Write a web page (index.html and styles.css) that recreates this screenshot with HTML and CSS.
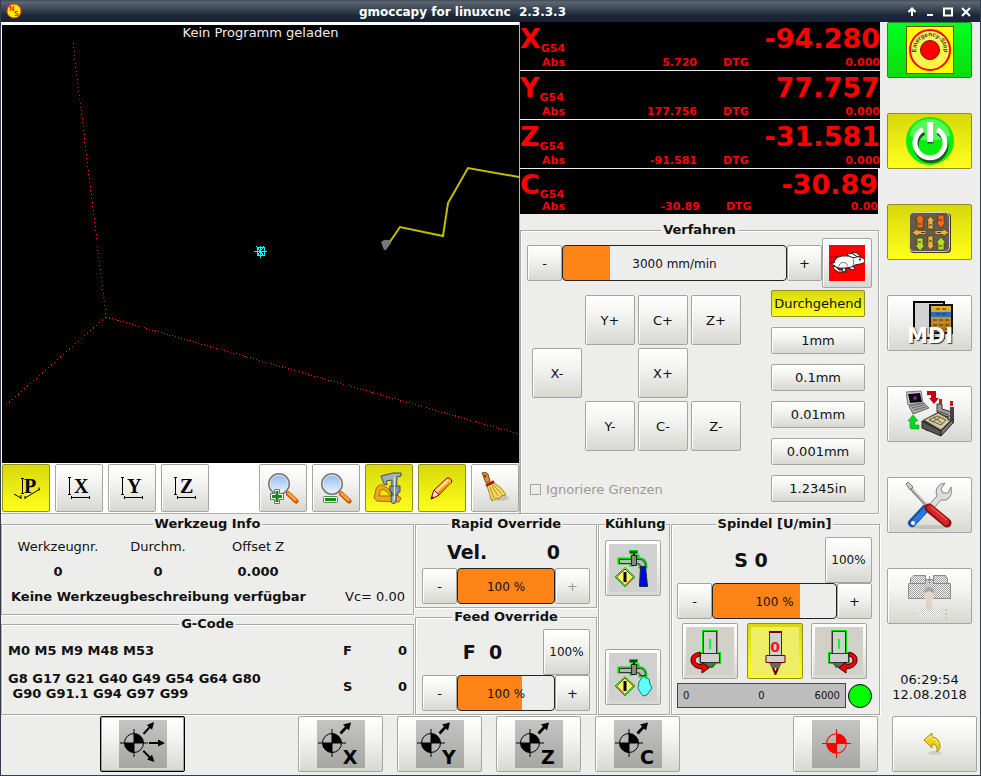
FILE: index.html
```html
<!DOCTYPE html>
<html lang="de">

<head>
  <meta charset="UTF-8">
  <meta name="viewport" content="width=device-width, initial-scale=1.0">
  <title>gmoccapy for linuxcnc 2.3.3.3</title>
  <link rel="stylesheet" href="styles.css">
</head>

<body>
  <!-- Shared icon parts -->
  <svg class="defs" width="0" height="0" aria-hidden="true">
    <defs>
      <linearGradient id="steel" x1="0" y1="0" x2="0" y2="1">
        <stop offset="0" stop-color="#c4c4c4" />
        <stop offset="1" stop-color="#a6a6a3" />
      </linearGradient>
      <linearGradient id="glass" x1="0" y1="0" x2="0" y2="1">
        <stop offset="0" stop-color="#8fb8ea" />
        <stop offset="1" stop-color="#eef6ff" />
      </linearGradient>
      <linearGradient id="bronze" x1="0" y1="0" x2="0" y2="1">
        <stop offset="0" stop-color="#e9b040" />
        <stop offset="1" stop-color="#a8701c" />
      </linearGradient>
      <pattern id="checker" width="2" height="2" patternUnits="userSpaceOnUse">
        <rect width="1" height="1" fill="#9d9d9d" />
        <rect x="1" y="1" width="1" height="1" fill="#9d9d9d" />
      </pattern>
    </defs>
    <symbol id="datum" viewBox="0 0 28 28">
      <circle cx="14" cy="14" r="9.5" fill="none" stroke="currentColor" />
      <path d="M14 14V4.500A9.500 9.500 0 0 1 23.500 14zM14 14v9.500A9.500 9.500 0 0 1 4.500 14z" fill="currentColor" />
      <path d="M14 0v28M0 14h28" stroke="currentColor" />
    </symbol>
    <symbol id="arrow" viewBox="0 0 16 8">
      <path d="M0 3h9V0.500L16 4L9 7.500V5H0z" fill="#000" />
    </symbol>
    <symbol id="home-axis" viewBox="0 0 48 48">
      <rect width="48" height="48" fill="url(#steel)" />
      <use href="#datum" x="1" y="9" width="28" height="28" />
      <path d="M22.500 12.500L28 6.500L26 4.500L34 2.500L32 10.500L30 8.500L24.500 14.500z" fill="#000" />
    </symbol>
    <symbol id="magnifier" viewBox="0 0 32 32">
      <path d="M20 20l3 3" stroke="#666" stroke-width="3" />
      <path d="M21.500 22l7.500 7" stroke="#c94f00" stroke-width="5" stroke-linecap="round" />
      <path d="M21.500 21.500l7 6.500" stroke="#ffa239" stroke-width="3" stroke-linecap="round" />
      <circle cx="12" cy="12" r="10" fill="url(#glass)" stroke="#777" stroke-width="2" />
      <circle cx="12" cy="12" r="9" fill="none" stroke="#eee" />
    </symbol>
    <symbol id="tap" viewBox="0 0 48 48">
      <rect width="48" height="48" fill="#d0d0d0" />
      <path d="M10 15h13v-3h6v3h3q5 1 5 8h-6v-3q0-1-2-1h-6v2h-1v-2H10z" fill="none" stroke="#00d800" stroke-width="3" />
      <path d="M25 7v5M20 8h9" stroke="#00d800" stroke-width="4" />
      <path d="M25 7v14M21 8h7" stroke="#183c18" stroke-width="2" />
      <path d="M10.500 15.500h21q5 1 5 7h-5q0-3-3-3h-18z" fill="#b8b8b8" stroke="#333" />
      <path d="M22.500 11.500h5v10h-5z" fill="#888" stroke="#222" />
      <path d="M16 23.500L26 33L16 43L6 33z" fill="#ffff50" stroke="#00b800" />
      <path d="M16 25L24.500 33L16 41.500L7.500 33z" fill="#fff36b" stroke="#333" />
      <path d="M16 28v10" stroke="#000" stroke-width="3" />
    </symbol>
    <symbol id="spindle" viewBox="0 0 48 48">
      <path d="M17.500 4.500h13v22h3v9h-4l-3 4h-5l-3-4h-4v-9h3z" fill="none" stroke="#00e000" stroke-width="3" />
      <path d="M18 35h12l-4 5h-4z" fill="#666" stroke="#333" />
      <path d="M17.500 4.500h13v22h-13z" fill="#d0d0cd" stroke="#333" />
      <path d="M14.500 26.500h19v9h-19z" fill="#d0d0cd" stroke="#333" />
      <path d="M24 12v10" stroke="#00ff30" stroke-width="2" />
    </symbol>
  </svg>

  <div class="window">
    <header class="titlebar">
      <svg class="app-logo" viewBox="0 0 16 16" aria-hidden="true">
        <circle cx="8" cy="8" r="7" fill="#ffef00" stroke="#ff3c00" />
        <text x="3" y="8" class="logo-text">N</text>
        <text x="8" y="13" class="logo-text">S</text>
      </svg>
      <h1>gmoccapy for linuxcnc&nbsp; 2.3.3.3</h1>
      <div class="window-controls">
        <button type="button" aria-label="Einrollen"><svg viewBox="0 0 10 10"><path d="M5 9V2M1.500 5L5 1.500L8.500 5" /></svg></button>
        <button type="button" aria-label="Minimieren"><svg viewBox="0 0 10 10"><path d="M2 8h6" /></svg></button>
        <button type="button" aria-label="Maximieren"><svg viewBox="0 0 10 10"><path d="M1 1.500h8v7H1z" /></svg></button>
        <button type="button" aria-label="Schließen"><svg viewBox="0 0 10 10"><path d="M1 1l8 8M9 1l-8 8" /></svg></button>
      </div>
    </header>

    <div class="content">
      <main class="workspace">
        <div class="upper">
          <section class="preview-panel">
            <div class="preview">
              <svg viewBox="0 0 517 438" preserveAspectRatio="xMidYMid slice" aria-hidden="true">
                <g fill="none" stroke="#e01818" shape-rendering="crispEdges">
                  <path d="M71 18L104 292" stroke-dasharray="1 3" />
                  <path d="M104 292L3 381" stroke-dasharray="1 3" />
                  <path d="M104 292L517 409" stroke-dasharray="1 2" />
                </g>
                <path d="M383 224L398 202L441 211L446 178L466 143L517 152" fill="none" stroke="#c2bf00" stroke-width="2" />
                <path d="M379 217l3-2h5l2 3l-5 7h-2z" fill="#777" />
                <path d="M252 226h13M254 221l8 10M262 221l-7 10M258 221v12M255 222h7v8h-7z" stroke="#00ffff" fill="none" shape-rendering="crispEdges" />
              </svg>
              <p>Kein Programm geladen</p>
            </div>
            <div class="preview-tools">
              <button type="button" class="btn active" aria-label="Perspektive">
                <svg viewBox="0 0 32 32" width="32" height="32">
                  <path d="M12.500 6v15M11 6.500h3M11 21.500h3M4 22l7 4M11 23v4M15 26l15-9M29 15.500v3M15 24v3" stroke="#000" fill="none" />
                  <text x="14" y="21" class="view-letter">P</text>
                </svg>
              </button>
              <button type="button" class="btn" aria-label="Ansicht X">
                <svg viewBox="0 0 32 32" width="32" height="32">
                  <path d="M6.500 5v17M5 5.500h3M5 22.500h3M9 25.500h17M8.500 24v3M26.500 24v3" stroke="#000" fill="none" />
                  <text x="11" y="21" class="view-letter">X</text>
                </svg>
              </button>
              <button type="button" class="btn" aria-label="Ansicht Y">
                <svg viewBox="0 0 32 32" width="32" height="32">
                  <path d="M6.500 5v17M5 5.500h3M5 22.500h3M9 25.500h17M8.500 24v3M26.500 24v3" stroke="#000" fill="none" />
                  <text x="11" y="21" class="view-letter">Y</text>
                </svg>
              </button>
              <button type="button" class="btn" aria-label="Ansicht Z">
                <svg viewBox="0 0 32 32" width="32" height="32">
                  <path d="M6.500 5v17M5 5.500h3M5 22.500h3M9 25.500h17M8.500 24v3M26.500 24v3" stroke="#000" fill="none" />
                  <text x="11" y="21" class="view-letter">Z</text>
                </svg>
              </button>
              <button type="button" class="btn push-right" aria-label="Vergrößern">
                <svg viewBox="0 0 32 32" width="32" height="32">
                  <use href="#magnifier" width="32" height="32" />
                  <path d="M7.500 17.500h5v4h4v6h-4v4h-5v-4h-4v-6h4z" fill="#fff" stroke="#4b8b4b" />
                  <path d="M10 19v11M5 24.500h10" stroke="#178a17" stroke-width="3" />
                </svg>
              </button>
              <button type="button" class="btn" aria-label="Verkleinern">
                <svg viewBox="0 0 32 32" width="32" height="32">
                  <use href="#magnifier" width="32" height="32" />
                  <rect x="3.500" y="24.500" width="14" height="6" rx="1" fill="#fff" stroke="#4b8b4b" />
                  <path d="M5 27.500h11" stroke="#178a17" stroke-width="3" />
                </svg>
              </button>
              <button type="button" class="btn active" aria-label="Bemaßung">
                <svg viewBox="0 0 32 32" width="32" height="32">
                  <path d="M1 26l2-9q2-5 7-4l18 13l-2 4l-22-1z" fill="#f0a81c" stroke="#a66a00" />
                  <path d="M6 24l1-5q2-3 5-1l6 6z" fill="#e8e410" stroke="#a66a00" />
                  <path d="M8 4l12-3h8v3l-4 1l-1 25l-2 2l-3-2l1-22l-6 1l1 4l-3-1z" fill="#9fb0bc" stroke="#3f4d58" />
                  <path d="M17 14h10v6h-2v3h-6v-3h-2z" fill="#8495a3" stroke="#3f4d58" />
                  <path d="M21.500 5v23" stroke="#dfe8ee" />
                </svg>
              </button>
              <button type="button" class="btn active" aria-label="Werkzeugweg">
                <svg viewBox="0 0 32 32" width="32" height="32">
                  <path d="M5 27l3-9L21 6q4-1 5 4L13 23z" fill="#ffb84d" stroke="#b50000" />
                  <path d="M10 19L22 8" stroke="#ffe4a0" stroke-width="2" />
                  <path d="M12 22L24 11" stroke="#e68a00" stroke-width="2" />
                  <path d="M8 18l5 5l-8 4z" fill="#fff1dc" stroke="#b50000" />
                  <path d="M5 27l1-3l2 2z" fill="#222" />
                </svg>
              </button>
              <button type="button" class="btn" aria-label="Löschen">
                <svg viewBox="0 0 32 32" width="32" height="32">
                  <ellipse cx="20" cy="26" rx="10" ry="3" fill="#c4c4bd" />
                  <path d="M3 1q3-2 6 1l2 7l-4 2z" fill="#d69543" stroke="#7c4c12" />
                  <circle cx="6" cy="4" r="1.500" fill="#7c4c12" />
                  <path d="M8 14l7-3q9 5 12 12l-5 1l-2 3l-3-1l-4 3Q11 23 8 14z" fill="#f4d766" stroke="#a98617" />
                  <path d="M11 15l4 11M13 14l6 10M14 13l9 9" stroke="#b8931f" fill="none" />
                  <path d="M7 13.500l8-4" stroke="#b01818" stroke-width="3" />
                </svg>
              </button>
            </div>
          </section>

          <section class="machine-panel">
            <div class="dro">
              <div class="dro-row">
                <div class="dro-main"><span>X<small>G54</small></span><span>-94.280</span></div>
                <div class="dro-sub"><span>Abs</span><span>5.720</span><span>DTG</span><span>0.000</span></div>
              </div>
              <div class="dro-row">
                <div class="dro-main"><span>Y<small>G54</small></span><span>77.757</span></div>
                <div class="dro-sub"><span>Abs</span><span>177.756</span><span>DTG</span><span>0.000</span></div>
              </div>
              <div class="dro-row">
                <div class="dro-main"><span>Z<small>G54</small></span><span>-31.581</span></div>
                <div class="dro-sub"><span>Abs</span><span>-91.581</span><span>DTG</span><span>0.000</span></div>
              </div>
              <div class="dro-row compact">
                <div class="dro-main"><span>C<small>G54</small></span><span>-30.89</span></div>
                <div class="dro-sub"><span>Abs</span><span>-30.89</span><span>DTG</span><span>0.00</span></div>
              </div>
            </div>

            <fieldset class="frame jog">
              <legend>Verfahren</legend>
              <div class="jog-speed">
                <div class="slider-row">
                  <button type="button" class="btn">-</button>
                  <label class="slider">
                    <input type="range" min="0" max="14000" value="3000" aria-label="Vorschub" style="--fill: 21%">
                    <span>3000 mm/min</span>
                  </label>
                  <button type="button" class="btn">+</button>
                </div>
                <button type="button" class="btn rabbit" aria-label="Eilgang">
                  <svg viewBox="0 0 36 36" width="36" height="36">
                    <rect width="36" height="36" fill="#ff0000" />
                    <path d="M1 12h13M2 14.500h9M1 18h5" stroke="#700" />
                    <g fill="#fff" stroke="#222" stroke-width="1" stroke-linejoin="round">
                      <path d="M27 13q-7 0-9-4q5-2 10 2z" />
                      <path d="M29 12q-5-2-6-5q5 0 8 4z" />
                      <path d="M6 21l4 4h7v2h-8l-5-4z" />
                      <path d="M21 20l5 3l-1 2l-7-2zM17 22l-1 5l-3-1l1-5z" />
                      <path d="M5 20q-2 1-2-1t2-1q1-6 8-7q7-1 12 2q3-2 6-1q5 1 5 4q-1 3-5 3l-5 1q-4 3-10 3q-8 1-11-3z" />
                    </g>
                    <path d="M10 21q1-5 7-3l2 3M24 14q2 3 0 6" fill="none" stroke="#777" />
                    <circle cx="31" cy="14.500" r="1" fill="#000" />
                  </svg>
                </button>
              </div>
              <div class="jog-body">
                <div class="jog-left">
                  <div class="jog-grid">
                    <button type="button" class="btn y-plus">Y+</button>
                    <button type="button" class="btn">C+</button>
                    <button type="button" class="btn">Z+</button>
                    <button type="button" class="btn x-minus">X-</button>
                    <button type="button" class="btn x-plus">X+</button>
                    <button type="button" class="btn y-minus">Y-</button>
                    <button type="button" class="btn">C-</button>
                    <button type="button" class="btn">Z-</button>
                  </div>
                  <label class="check"><input type="checkbox" disabled> Ignoriere Grenzen</label>
                </div>
                <div class="increments">
                  <button type="button" class="btn active">Durchgehend</button>
                  <button type="button" class="btn">1mm</button>
                  <button type="button" class="btn">0.1mm</button>
                  <button type="button" class="btn">0.01mm</button>
                  <button type="button" class="btn">0.001mm</button>
                  <button type="button" class="btn">1.2345in</button>
                </div>
              </div>
            </fieldset>
          </section>
        </div>

        <div class="lower">
          <div class="stack info">
            <fieldset class="frame tool-info">
              <legend>Werkzeug Info</legend>
              <table>
                <tr>
                  <th>Werkzeugnr.</th>
                  <th>Durchm.</th>
                  <th>Offset Z</th>
                </tr>
                <tr>
                  <td>0</td>
                  <td>0</td>
                  <td>0.000</td>
                </tr>
              </table>
              <p class="tool-desc"><strong>Keine Werkzeugbeschreibung verfügbar</strong><span>Vc= 0.00</span></p>
            </fieldset>
            <fieldset class="frame gcode">
              <legend>G-Code</legend>
              <div class="code-row">
                <p>M0 M5 M9 M48 M53</p><span>F</span><span>0</span>
              </div>
              <div class="code-row">
                <p>G8 G17 G21 G40 G49 G54 G64 G80<br>&nbsp;G90 G91.1 G94 G97 G99</p><span>S</span><span>0</span>
              </div>
            </fieldset>
          </div>

          <div class="stack overrides">
            <fieldset class="frame rapid">
              <legend>Rapid Override</legend>
              <div class="reading spread"><span>Vel.</span><span>0</span></div>
              <div class="slider-row">
                <button type="button" class="btn">-</button>
                <label class="slider">
                  <input type="range" min="0" max="100" value="100" aria-label="Rapid Override" style="--fill: 100%">
                  <span>100 %</span>
                </label>
                <button type="button" class="btn" disabled>+</button>
              </div>
            </fieldset>
            <fieldset class="frame feed">
              <legend>Feed Override</legend>
              <div class="reading"><span class="value">F&nbsp; 0</span><button type="button" class="btn reset">100%</button></div>
              <div class="slider-row">
                <button type="button" class="btn">-</button>
                <label class="slider">
                  <input type="range" min="0" max="150" value="100" aria-label="Feed Override" style="--fill: 67%">
                  <span>100 %</span>
                </label>
                <button type="button" class="btn">+</button>
              </div>
            </fieldset>
          </div>

          <fieldset class="frame cooling">
            <legend>Kühlung</legend>
            <div class="cooling-buttons">
              <button type="button" class="btn square" aria-label="Flut">
                <svg viewBox="0 0 48 48" width="48" height="48">
                  <use href="#tap" width="48" height="48" />
                  <path d="M31.500 22.500h5l2 20h-8z" fill="#0000f0" stroke="#003a20" />
                </svg>
              </button>
              <button type="button" class="btn square" aria-label="Nebel">
                <svg viewBox="0 0 48 48" width="48" height="48">
                  <use href="#tap" width="48" height="48" />
                  <path d="M34 23l3 2l3 1l1 5l2 4l-3 4l-2 3l-4 1l-3-4l-2-4l1-6z" fill="#60ffff" stroke="#009060" />
                </svg>
              </button>
            </div>
          </fieldset>

          <fieldset class="frame spindle">
            <legend>Spindel [U/min]</legend>
            <div class="reading"><span class="value">S 0</span><button type="button" class="btn reset">100%</button></div>
            <div class="slider-row">
              <button type="button" class="btn">-</button>
              <label class="slider">
                <input type="range" min="0" max="140" value="100" aria-label="Spindel Override" style="--fill: 71%">
                <span>100 %</span>
              </label>
              <button type="button" class="btn">+</button>
            </div>
            <div class="spindle-buttons">
              <button type="button" class="btn square" aria-label="Linkslauf">
                <svg viewBox="0 0 48 48" width="48" height="48">
                  <rect width="48" height="48" fill="#d2d1c9" />
                  <use href="#spindle" width="48" height="48" />
                  <path d="M14 25Q4 27 5 34Q6 41 16 42v4l7-5l-7-6v3Q9 37 9 33Q9 30 14 29z" fill="#f00000" stroke="#400" />
                </svg>
              </button>
              <button type="button" class="btn square active" aria-label="Spindel Stopp">
                <svg viewBox="0 0 48 48" width="48" height="48">
                  <rect width="48" height="48" fill="#eeee66" />
                  <path d="M18.500 5h12v24h-12z" fill="#d0d0cd" stroke="#333" />
                  <path d="M18 5h13" stroke="#700" stroke-width="2" />
                  <path d="M20 36h9l-4.500 11z" fill="#ffe84d" stroke="#600" stroke-width="2" />
                  <path d="M15 28.500h19v7H15z" fill="#d0d0cd" stroke="#600" />
                  <path d="M18 36h13l-3 5h-7z" fill="#666" />
                  <text x="24" y="25" class="stop-digit">0</text>
                </svg>
              </button>
              <button type="button" class="btn square" aria-label="Rechtslauf">
                <svg viewBox="0 0 48 48" width="48" height="48">
                  <rect width="48" height="48" fill="#d2d1c9" />
                  <use href="#spindle" width="48" height="48" />
                  <path d="M34 25Q43 27 42 34Q41 41 31 42v4l-7-5l7-6v3Q38 37 38 33Q38 30 34 29z" fill="#f00000" stroke="#400" />
                </svg>
              </button>
            </div>
            <div class="rpm">
              <div class="rpm-bar"><span>0</span><span>0</span><span>6000</span></div>
              <span class="led"></span>
            </div>
          </fieldset>
        </div>
      </main>

      <aside class="sidebar">
        <button type="button" class="btn go" aria-label="Not-Aus">
          <svg viewBox="0 0 48 48" width="48" height="48">
            <rect x=".5" y=".5" width="47" height="47" fill="#ffff00" stroke="#705000" />
            <circle cx="24" cy="24" r="20" fill="#fff44a" stroke="#ff0000" stroke-width="2" />
            <circle cx="24" cy="24" r="9.500" fill="#ff0000" stroke="#701010" />
            <path id="stop-arc" d="M13 33A14 14 0 1 1 35 33" fill="none" />
            <text class="estop-text"><textPath href="#stop-arc" startOffset="50%">Emergency-Stop</textPath></text>
          </svg>
        </button>
        <button type="button" class="btn active" aria-label="Maschine an">
          <svg viewBox="0 0 48 48" width="48" height="48">
            <circle cx="24" cy="24" r="24" fill="#08ee10" />
            <path d="M4 19a20 17 0 0 1 40 0q-20 9-40 0z" fill="#8aff8a" opacity=".6" />
            <path d="M17 13.500a15 15 0 1 0 14 0" fill="none" stroke="#175e1d" stroke-width="5" transform="translate(1 2)" />
            <path d="M17 12.500a15 15 0 1 0 14 0" fill="none" stroke="#fff" stroke-width="5" />
            <path d="M21.500 25.500h6" stroke="#175e1d" stroke-width="2" />
            <path d="M24 5v20" stroke="#fff" stroke-width="6" />
          </svg>
        </button>
        <button type="button" class="btn active" aria-label="Handbetrieb">
          <svg viewBox="0 0 48 48" width="48" height="48">
            <rect x="4" y="5" width="41" height="40" rx="4" fill="#3e3a2c" />
            <rect x="3.500" y="4.500" width="40" height="39" rx="4" fill="#625c49" stroke="#d6d2b4" />
            <g stroke="#3a2c10" stroke-width=".6">
              <path d="M14 6l5 6H17v8h-6v-8H9zM35 20l-5-6h2V7h6v7h2z" fill="#f26a1b" />
              <path d="M24.500 8l4 5H27v8h-5v-8h-1.500zM24.500 42l-4-5H22v-9h5v9h1.500z" fill="#e8b040" />
              <path d="M6 24.500l6-4v2h8v4h-8v2zM43 24.500l-6-4v2h-8v4h8v2z" fill="#e8b040" />
              <path d="M14 43l-5-6H11v-7h6v7h2zM35 29l5 6H38v7h-6v-7h-2z" fill="#b4dc28" />
            </g>
            <path d="M12 16h3M23 17h3M33 12h3M15 24.500h4M31 24.500h4M12 34h3M23 33h3M33 38h3" stroke="#4a3510" />
          </svg>
        </button>
        <button type="button" class="btn" aria-label="MDI">
          <svg viewBox="0 0 48 48" width="48" height="48">
            <path d="M8 3h30v36H8z" fill="#d2d2d2" stroke="#000" stroke-width="2" />
            <path d="M24 6h22v28H24z" fill="url(#bronze)" stroke="#111" stroke-width="2" />
            <path d="M25 13h20v5H25z" fill="#236fc4" />
            <path d="M30 10h12M30 15h12M27 21h16M27 26h16M27 30h16" stroke="#493010" stroke-dasharray="4 2" />
            <text x="24" y="44" class="mdi-text">MDI</text>
          </svg>
        </button>
        <button type="button" class="btn" aria-label="Automatik">
          <svg viewBox="0 0 48 48" width="48" height="48">
            <path d="M0 2l15-1l2 12l-15 2z" fill="#ccc" stroke="#777" />
            <path d="M2 4l12-1l2 9l-12 1z" fill="#100818" />
            <circle cx="9" cy="8" r="2" fill="#702c80" />
            <path d="M3 16l15-3l5 5l-16 6z" fill="#aaa" stroke="#666" />
            <path d="M6 18l12-3M8 20l12-3" stroke="#666" />
            <path d="M21 1h9v7h3l-5 6l-5-6h2V5h-4z" fill="#c40010" />
            <path d="M13 39H6q-2 0-2-2v-6H2l5-6l5 6H9v4h4z" fill="#00d818" stroke="#008810" stroke-width=".5" />
            <path d="M17 30l15-8l16 7l-13 17L16 37z" fill="#333" />
            <path d="M18 30l14-7l13 7l-10 10z" fill="#d4c9a4" stroke="#5c5540" />
            <path d="M23 30l8-4l9 4l-5 5zM27 27l9 6M35 27l-9 5" fill="none" stroke="#665c3c" />
            <path d="M31 22V14h5v5l10 3v8h-4v-5l-8-3z" fill="#999" stroke="#333" />
            <path d="M44 17h4v16h-4z" fill="#444" />
            <path d="M33 9h3v5h-3zM44 11h3v5h-3zM20 37h3v4h-3z" fill="#d01818" />
            <path d="M16 31v7l19 8v-5z" fill="#555" stroke="#222" />
            <path d="M35 41v5l12-13v-4z" fill="#777" stroke="#222" />
          </svg>
        </button>
        <button type="button" class="btn" aria-label="Einstellungen">
          <svg viewBox="0 0 48 48" width="48" height="48">
            <ellipse cx="24" cy="46" rx="20" ry="2" fill="#c2c2bc" />
            <path d="M6 42L20 27" stroke="#174e9e" stroke-width="8" stroke-linecap="round" />
            <path d="M7 42L21 27" stroke="#2c78e2" stroke-width="5" stroke-linecap="round" />
            <circle cx="7" cy="42" r="2" fill="#fff" />
            <path d="M23 24l8-9q-3-8 4-12l4-1l-4 6l2 4l5 0l3-6q2 10-5 13l-5 0l-8 9z" fill="#ddd" stroke="#888" />
            <path d="M3 4l4 6l16 17" fill="none" stroke="#888" stroke-width="3" />
            <path d="M2 3l4 5l17 18" fill="none" stroke="#eee" />
            <path d="M2 1l5 5l-3 3l-4-6z" fill="#ccc" stroke="#777" />
            <path d="M23 27L41 42" stroke="#8e1010" stroke-width="9" stroke-linecap="round" />
            <path d="M24 27L40 41" stroke="#d82525" stroke-width="6" stroke-linecap="round" />
            <path d="M25 26L41 39" stroke="#f07a70" />
          </svg>
        </button>
        <button type="button" class="btn" aria-label="Benutzer" disabled>
          <svg viewBox="0 0 48 48" width="48" height="48">
            <path d="M2.500 26.500v-15h2v-5l3-3h12v4h8v-4h12l2 3v5h3v15z" fill="#f4f4f4" />
            <path d="M2.500 26.500v-15h2v-5l3-3h12v4h8v-4h12l2 3v5h3v15z" fill="url(#checker)" stroke="#8a8a8a" />
            <path d="M19.500 7v4.500h-15M27.500 7v4.500h14M23.500 4v8" fill="none" stroke="#8a8a8a" />
            <path d="M10 45q1-8 10-10h6q9 2 10 10z" fill="#fff" />
            <path d="M10 45q1-8 10-10h6q9 2 10 10z" fill="url(#checker)" opacity=".6" />
            <path d="M20 28h6v8l-3 3l-3-3z" fill="#ddd0c6" />
            <ellipse cx="23" cy="23" rx="5" ry="8" fill="#e4d4c8" />
            <path d="M18 21q0-6 5-6t5 6l-5-2z" fill="#aaa49e" />
            <path d="M40 37v10" stroke="#aaa" stroke-dasharray="2 2" />
          </svg>
        </button>
        <p class="clock">06:29:54<br>12.08.2018</p>
      </aside>
    </div>

    <nav class="bottom-bar">
      <button type="button" class="btn focused col-2" aria-label="Referenzfahrt alle">
        <svg viewBox="0 0 48 48" width="48" height="48">
          <rect width="48" height="48" fill="url(#steel)" />
          <use href="#datum" x="1" y="9" width="28" height="28" />
          <use href="#arrow" x="30" y="19" width="16" height="8" />
          <use href="#arrow" x="30" y="19" width="16" height="8" transform="rotate(-48 15 23) translate(-2 1)" />
          <use href="#arrow" x="30" y="19" width="16" height="8" transform="rotate(45 15 23) translate(-3 -1)" />
        </svg>
      </button>
      <button type="button" class="btn col-4" aria-label="Referenz X">
        <svg viewBox="0 0 48 48" width="48" height="48"><use href="#home-axis" width="48" height="48" /><text x="33" y="44" class="axis-letter">X</text></svg>
      </button>
      <button type="button" class="btn" aria-label="Referenz Y">
        <svg viewBox="0 0 48 48" width="48" height="48"><use href="#home-axis" width="48" height="48" /><text x="33" y="44" class="axis-letter">Y</text></svg>
      </button>
      <button type="button" class="btn" aria-label="Referenz Z">
        <svg viewBox="0 0 48 48" width="48" height="48"><use href="#home-axis" width="48" height="48" /><text x="33" y="44" class="axis-letter">Z</text></svg>
      </button>
      <button type="button" class="btn" aria-label="Referenz C">
        <svg viewBox="0 0 48 48" width="48" height="48"><use href="#home-axis" width="48" height="48" /><text x="33" y="44" class="axis-letter">C</text></svg>
      </button>
      <button type="button" class="btn unhome col-9" aria-label="Referenz aufheben">
        <svg viewBox="0 0 48 48" width="48" height="48">
          <rect width="48" height="48" fill="url(#steel)" />
          <use href="#datum" x="10" y="9" width="29" height="29" />
        </svg>
      </button>
      <button type="button" class="btn" aria-label="Zurück">
        <svg viewBox="0 0 24 24" width="24" height="24">
          <ellipse cx="12" cy="21" rx="7" ry="2" fill="#cfcfc8" />
          <path d="M1 8l8-7v4q8 1 8 9q0 4-3 6q1-8-5-8v4z" fill="#ecd020" stroke="#b09000" stroke-linejoin="round" />
          <path d="M3 8l5-4v2q6 1 8 6" fill="none" stroke="#fff39a" />
        </svg>
      </button>
    </nav>
  </div>
</body>

</html>
```
FILE: styles.css
```css
/* Global Styles */
* {
  box-sizing: border-box;
}

body {
  margin: 0;
  font-family: "DejaVu Sans", sans-serif;
  font-size: 13px;
  line-height: 15px;
  color: #111;
  background: #ededeb;
}

p {
  margin: 0;
}

.defs {
  position: absolute;
}

.window {
  display: flex;
  flex-direction: column;
  min-height: 100vh;
  padding-bottom: 3px;
  border: 1px solid #323f50;
  border-top: 0;
}

/* Title bar */
.titlebar {
  display: flex;
  align-items: center;
  height: 22px;
  padding: 0 5px;
  color: #fff;
  background: linear-gradient(#424b59, #5c6571 10%, #1c2839 70%, #182434);
}

.titlebar h1 {
  flex: 1;
  margin: 0;
  padding-top: 3px;
  font-size: 12px;
  text-align: center;
}

.app-logo {
  width: 16px;
  height: 16px;
}

.logo-text {
  font: bold 7px "DejaVu Sans", sans-serif;
  fill: #ff3000;
}

.window-controls {
  display: flex;
}

.window-controls button {
  display: flex;
  justify-content: center;
  width: 18px;
  padding: 2px 0 0;
  border: 0;
  background: none;
}

.window-controls svg {
  width: 10px;
  height: 10px;
  fill: none;
  stroke: #fff;
  stroke-width: 2;
}

/* Buttons */
.btn {
  display: flex;
  align-items: center;
  justify-content: center;
  padding: 0;
  border: 1px solid #a4a59c;
  border-radius: 2px;
  font: inherit;
  color: #111;
  background: linear-gradient(#fff, #f3f3f1 40%, #d6d8d1);
  box-shadow: inset 1px 1px 0 #fff;
}

.btn svg {
  flex-shrink: 0;
}

.btn.active {
  border-color: #8f8f1c;
  background: linear-gradient(#d8d80c, #ffff1c);
  box-shadow: none;
}

.btn.go {
  border-color: #1a8f1a;
  background: linear-gradient(#00ff24, #0cdc0c);
  box-shadow: none;
}

.btn.focused {
  border-color: #000;
  box-shadow: inset 0 0 0 1px #a4a59c;
}

.btn:disabled {
  color: #999a93;
}

.square {
  width: 56px;
  height: 56px;
}

/* Frames */
.frame {
  min-width: 0;
  margin: 0;
  padding: 0 6px;
  border: 1px solid #a9aaa2;
  box-shadow: 1px 1px 0 #fff, inset 1px 1px 0 #fff;
}

.frame legend {
  height: 16px;
  margin: 0 auto;
  padding: 0 2px;
  font-weight: bold;
  line-height: 16px;
  white-space: nowrap;
  background: #ededeb;
}

/* Sliders */
.slider-row {
  display: flex;
  flex: 1;
  height: 36px;
}

.slider-row .btn {
  width: 35px;
}

.slider {
  position: relative;
  flex: 1;
  min-width: 0;
}

.slider input {
  display: block;
  width: 100%;
  height: 100%;
  margin: 0;
  appearance: none;
  border: 1px solid #222;
  border-radius: 4px;
  background: linear-gradient(to right, #ff8418 var(--fill), #ededeb var(--fill));
}

.slider input::-webkit-slider-thumb {
  appearance: none;
  width: 1px;
  height: 1px;
}

.slider span {
  position: absolute;
  inset: 2px 0 0;
  display: grid;
  place-items: center;
  font-size: 12px;
  pointer-events: none;
}

/* Layout */
.content {
  display: flex;
  flex: 1;
}

.workspace {
  display: flex;
  flex: 1;
  flex-direction: column;
  gap: 2px;
  min-width: 0;
}

.upper {
  display: flex;
  flex: 1;
}

/* Preview */
.preview-panel {
  display: flex;
  flex: 1;
  flex-direction: column;
  min-width: 0;
  padding: 3px 0 0 1px;
  border-right: 1px solid #b5b5b2;
  border-bottom: 1px solid #b0b0ac;
  background: #fff;
}

.preview {
  position: relative;
  flex: 1;
  background: #000;
}

.preview svg {
  position: absolute;
  width: 100%;
  height: 100%;
}

.preview p {
  position: relative;
  color: #eee;
  text-align: center;
}

.preview-tools {
  display: flex;
  gap: 5px;
  padding: 1px 0;
}

.preview-tools .btn {
  width: 48px;
  height: 48px;
}

.preview-tools .push-right {
  margin-left: auto;
}

.view-letter {
  font: bold 20px "Liberation Serif", serif;
}

/* DRO */
.machine-panel {
  display: flex;
  flex-direction: column;
  width: 360px;
}

.dro {
  font-size: 11px;
  font-weight: bold;
  color: #f00;
}

.dro-row {
  border-bottom: 1px solid #eee;
  background: #000;
}

.dro-main {
  display: flex;
  justify-content: space-between;
  font-size: 27px;
  line-height: 34px;
}

.dro-main small {
  font-size: 11px;
  line-height: 1;
  vertical-align: -4px;
}

.dro-sub {
  display: grid;
  grid-template-columns: 63fr 96fr 152fr 0fr;
  padding-left: 22px;
  line-height: 14px;
}

.dro-sub span:nth-child(2) {
  text-align: right;
}

.dro-sub span:nth-child(3) {
  padding-left: 26px;
}

.dro-row.compact {
  margin-right: 2px;
  border: 0;
}

.compact .dro-main {
  line-height: 31px;
}

/* Jogging */
.jog {
  flex: 1;
  margin: 8px 1px 0 0;
}

.jog-speed {
  display: flex;
  align-items: center;
}

.rabbit {
  width: 50px;
  height: 50px;
}

.jog-body {
  display: flex;
  justify-content: space-between;
  padding: 2px 7px 0 3px;
}

.jog-left {
  display: flex;
  flex-direction: column;
  justify-content: space-between;
  padding: 5px 0;
}

.jog-grid {
  display: grid;
  grid-template-columns: repeat(4, 50px);
  grid-auto-rows: 50px;
  gap: 3px;
  padding-left: 2px;
}

.y-plus,
.y-minus {
  grid-column: 2;
}

.x-minus {
  grid-column: 1;
}

.x-plus {
  grid-column: 3;
}

.increments {
  display: flex;
  flex-direction: column;
  gap: 10px;
  width: 94px;
}

.increments .btn {
  height: 27px;
}

.check {
  display: flex;
  align-items: center;
  gap: 5px;
  color: #999a93;
}

.check input {
  width: 11px;
  height: 11px;
  margin: 0;
  appearance: none;
  border: 1px solid #a4a59c;
}

/* Lower row */
.lower {
  display: flex;
  gap: 1px;
}

.stack {
  display: flex;
  flex-direction: column;
  gap: 1px;
}

.info {
  flex: 1;
}

.info .frame {
  height: 99px;
}

.tool-info table {
  width: 300px;
  margin-top: 2px;
  border-collapse: collapse;
  table-layout: fixed;
}

.tool-info th,
.tool-info td {
  height: 25px;
  padding: 0;
  font-weight: normal;
  text-align: center;
}

.tool-info td {
  font-weight: bold;
}

.tool-desc {
  display: flex;
  justify-content: space-between;
  padding: 5px 2px 0 3px;
}

.code-row {
  display: grid;
  grid-template-columns: 1fr 30px 34px;
  align-items: center;
  height: 36px;
  font-weight: bold;
}

.code-row span:last-child {
  text-align: right;
}

.overrides {
  width: 182px;
}

.rapid {
  height: 92px;
}

.feed {
  height: 106px;
}

.feed .reading {
  padding-top: 4px;
}

.reading {
  display: flex;
  align-items: center;
  font-size: 19px;
  font-weight: bold;
}

.reading.spread {
  justify-content: space-between;
  height: 36px;
  padding: 4px 30px 0 25px;
}

.reading .value {
  flex: 1;
  text-align: center;
}

.reset {
  width: 47px;
  height: 46px;
  font-size: 12px;
  font-weight: normal;
}

.cooling {
  width: 72px;
}

.cooling legend {
  padding: 0;
}

.cooling-buttons {
  display: flex;
  flex-direction: column;
  gap: 53px;
  padding-top: 8px;
}

.spindle {
  width: 209px;
  padding: 0 7px 0 5px;
}

.spindle .reading {
  padding-top: 5px;
}

.spindle-buttons {
  display: flex;
  justify-content: space-between;
  padding: 4px 5px;
}

.stop-digit {
  font: bold 14px "DejaVu Sans", sans-serif;
  text-anchor: middle;
  fill: #f01818;
}

.rpm {
  display: flex;
  align-items: center;
  gap: 2px;
}

.rpm-bar {
  display: grid;
  flex: 1;
  grid-template-columns: repeat(3, 1fr);
  align-items: center;
  height: 25px;
  padding: 0 5px;
  border: 1px solid #444;
  font-size: 10px;
  text-align: center;
  background: #bdbdbd;
}

.rpm-bar span:first-child {
  text-align: left;
}

.rpm-bar span:last-child {
  text-align: right;
}

.led {
  width: 24px;
  height: 24px;
  border: 1px solid #000;
  border-radius: 50%;
  background: #00ff00;
}

/* Sidebar */
.sidebar {
  display: flex;
  flex-direction: column;
  gap: 35px;
  width: 100px;
  padding: 0 8px 0 7px;
}

.sidebar .btn {
  height: 56px;
}

.estop-text {
  font: bold 6px "Liberation Sans", sans-serif;
  text-anchor: middle;
  fill: #20306c;
}

.mdi-text {
  font: bold 21px "DejaVu Sans", sans-serif;
  text-anchor: middle;
  text-shadow: 1px 1px 1px #333;
  fill: #fff;
}

.clock {
  display: grid;
  place-content: center;
  height: 56px;
  text-align: center;
}

/* Bottom bar */
.bottom-bar {
  display: grid;
  grid-template-columns: repeat(10, 1fr);
  gap: 14px;
  margin-top: 1px;
  padding-right: 3px;
}

.bottom-bar .btn {
  height: 56px;
  color: #000;
}

.bottom-bar .unhome {
  color: #f00;
}

.col-2 {
  grid-column: 2;
}

.col-4 {
  grid-column: 4;
}

.col-9 {
  grid-column: 9;
}

.axis-letter {
  font: bold 19px "DejaVu Sans", sans-serif;
  text-anchor: middle;
}
```
